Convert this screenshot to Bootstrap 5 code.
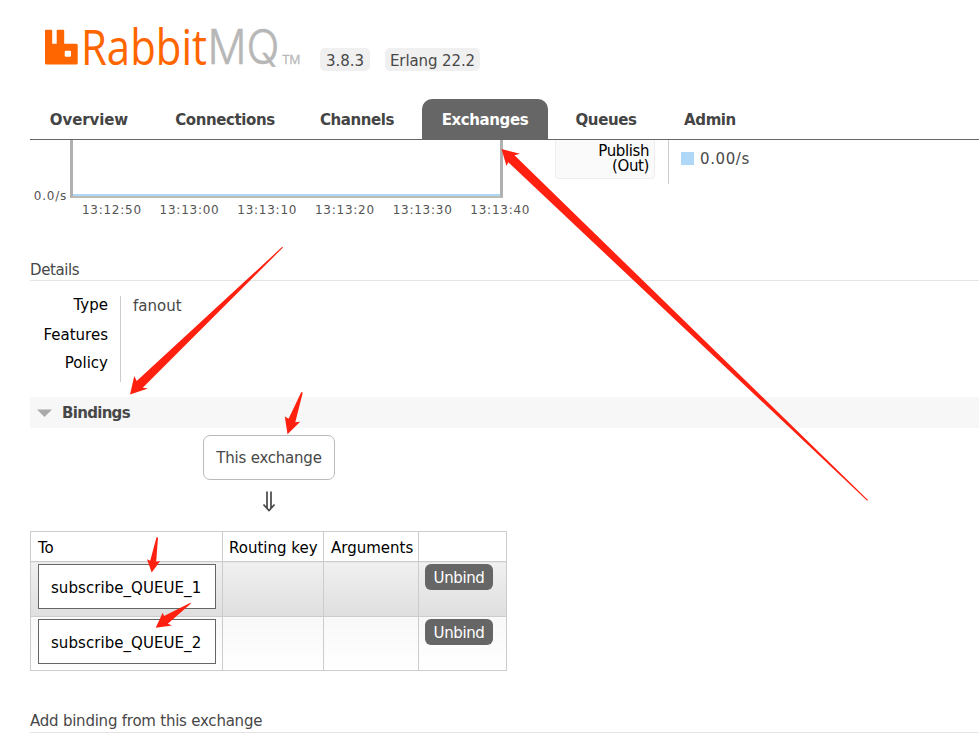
<!DOCTYPE html>
<html lang="en">
<head>
<meta charset="utf-8">
<title>RabbitMQ Management</title>
<link rel="stylesheet" href="https://cdn.jsdelivr.net/npm/bootstrap@5.3.0/dist/css/bootstrap.min.css">
<style>
body{font:15px/18px "DejaVu Sans",Verdana,sans-serif;color:#484848;width:979px;height:742px;overflow:hidden;background:#fff}
.site-head{height:99px;padding:20px 0 0 30px}
.logo{overflow:visible}
.ver{background:#f0f0f0;border-radius:5px;height:23px;line-height:26px;margin-top:28px;text-align:center;white-space:nowrap}
.v1{width:50px}.v2{width:95px;margin-left:15px;letter-spacing:-.1px}
.tabs{height:41px;margin-left:30px;border-bottom:1px solid #666}
.tabs .nav-link{padding:0;height:40px;line-height:43px;font-weight:700;color:#444;border-radius:10px 10px 0 0;text-align:center;white-space:nowrap;letter-spacing:-.4px}
.tabs .nav-link.active{background:#666;color:#fff}
.tabs .t1{width:118px;margin-right:8px;letter-spacing:-.1px}.t2{width:138px;margin-right:6px}.t3{width:114px;margin-right:8px}.t4{width:126px;margin-right:7px}.t5{width:102px;margin-right:7px}.t6{width:92px}
.chart-row{height:120px;padding-left:30px}
.plot{width:525px;color:#545454;font-size:12px;letter-spacing:.75px}
.y-label{width:40px;padding:48px 3px 0 0;line-height:16px;text-align:right}
.plot-box{width:433px;height:58px;border:solid #b0b0b0;border-width:0 3px;border-bottom:2px solid #bbbdb4;background:linear-gradient(#afd8f8,#afd8f8) 0 100%/100% 2px no-repeat}
.ticks{padding-left:43px;line-height:15px;margin-top:-1px}
.ticks span{width:77.7px;text-align:center;flex:none}
.pub{width:100px;height:39px;border:1px solid #eee;border-top:0;border-radius:0 0 4px 4px;background:#fafafa;color:#000;line-height:15px;padding:4px 5px 0 0;text-align:right;letter-spacing:-.4px}
.rate{height:44px;margin-left:13px;border-left:1px solid #ccc;padding:10px 0 0 12px;letter-spacing:.6px}
.swatch{width:13px;height:13px;background:#afd8f8;margin:2px 6px 0 0}
.sec{margin:0 0 0 30px;height:21px;border-bottom:1px solid #e4e4e4;font-size:15px;font-weight:400;line-height:20px;letter-spacing:-.4px}
.sec-add{margin-top:41px;line-height:18px;letter-spacing:-.23px}
.facts{margin:15px 0 0 30px;height:86px}
.fact-names{width:91px;padding-right:12px;border-right:1px solid #ccc;color:#000;text-align:right}
.fact-names div{height:29px}
.fact-names div:nth-child(2){padding-top:1px}
.fact-val{padding:1px 0 0 12px}
.bind-head{margin:15px 0 0 30px;height:31px;background:#f7f7f7;font-size:15px;line-height:32px;font-weight:700;padding-left:7px;letter-spacing:-.7px}
.bind-head svg{margin-right:10px}
.exch{width:132px;height:45px;border:1px solid #bbb;border-radius:7px;line-height:45px;text-align:center;margin:7px 0 0 203px;white-space:nowrap;letter-spacing:-.22px}
.down{margin-left:203px;width:132px;height:51px;padding-top:11px;text-align:center}
.bind-table{width:477px;margin-left:30px;border-collapse:collapse;table-layout:fixed;color:#000}
.bind-table th,.bind-table td{border:1px solid #ccc;font-weight:400;padding:2px 6px 0;vertical-align:top;white-space:nowrap}
.bind-table th{height:30px;padding-top:7px}
.bind-table th:first-child,.bind-table th:nth-child(3){padding-left:7px}
.c1{width:192px}.c2{width:101px}.c3{width:95px}.c4{width:88px}
.h1st{height:55px}.h2nd{height:54px}
.h1st td{background:linear-gradient(#f0f0f0,#dfdfdf)}
.h2nd td{background:linear-gradient(#f8f8f8,#fff)}
.queue{width:178px;height:45px;background:#fff;border:1px solid #666;line-height:46px;padding-left:12px;margin-left:1px;letter-spacing:.06px}
.btn-unbind{background:#666;color:#fff;width:68px;height:26px;padding:2px 0 0;border:0;border-radius:6px;font-size:15px;line-height:25px;display:block;letter-spacing:-.4px}
.arrows{left:0;top:0;pointer-events:none}
</style>
<script src="https://cdn.jsdelivr.net/npm/bootstrap@5.3.0/dist/js/bootstrap.bundle.min.js"></script>
</head>
<body class="position-relative">
<header class="site-head d-flex">
<svg width="290" height="60" viewBox="30 20 290 60" class="logo flex-shrink-0" font-family="Open Sans, sans-serif">
<path d="M46 29.700h5.200q1 0 1 1V43.800h4.500V30.700q0-1 1-1h5.500q1 0 1 1V43.800h12q1.500 0 1.500 1.500V63q0 1.500-1.500 1.500H46.500q-1.500 0-1.500-1.500V30.700q0-1 1-1zM65.700 50.700q-1 0-1 1v4q0 1 1 1h4.300q1 0 1-1v-4q0-1-1-1z" fill="#f60"/>
<text x="81" y="64.500" font-size="48.500" textLength="126" lengthAdjust="spacingAndGlyphs" fill="#f60">Rabbit</text>
<text x="207.500" y="64.300" font-family="Inter, sans-serif" font-size="47.500" font-weight="300" textLength="72" lengthAdjust="spacingAndGlyphs" fill="#b7b7b7" stroke="#b7b7b7" stroke-width=".5">MQ</text>
<text x="282.500" y="64" font-size="12.500" textLength="18" lengthAdjust="spacingAndGlyphs" fill="#b7b7b7" stroke="#b7b7b7" stroke-width=".3">TM</text>
</svg>
<span class="ver v1">3.8.3</span><span class="ver v2">Erlang 22.2</span>
</header>
<nav class="tabs nav flex-nowrap">
<a class="nav-link t1" href="#">Overview</a><a class="nav-link t2" href="#">Connections</a><a class="nav-link t3" href="#">Channels</a><a class="nav-link active t4" href="#">Exchanges</a><a class="nav-link t5" href="#">Queues</a><a class="nav-link t6" href="#">Admin</a>
</nav>
<main>
<section class="chart-row d-flex align-items-start">
<div class="plot">
<div class="d-flex"><div class="y-label">0.0/s</div><div class="plot-box"></div></div>
<div class="ticks d-flex"><span>13:12:50</span><span>13:13:00</span><span>13:13:10</span><span>13:13:20</span><span>13:13:30</span><span>13:13:40</span></div>
</div>
<div class="pub">Publish<br>(Out)</div>
<div class="rate d-flex"><span class="swatch"></span><span>0.00/s</span></div>
</section>
<h2 class="sec">Details</h2>
<section class="facts d-flex"><div class="fact-names"><div>Type</div><div>Features</div><div>Policy</div></div><div class="fact-val">fanout</div></section>
<h2 class="bind-head d-flex align-items-center"><svg width="15" height="8"><path d="M0 .5h15L7.500 8z" fill="#aaa"/></svg><span>Bindings</span></h2>
<div class="exch">This exchange</div>
<div class="down"><svg width="14" height="21" fill="none" stroke="#484848" stroke-width="1.700"><path d="M5 .5V17M9 .5V17M1.500 13.500L7 19.500l5.500-6"/></svg></div>
<table class="bind-table">
<colgroup><col class="c1"><col class="c2"><col class="c3"><col class="c4"></colgroup>
<thead><tr><th>To</th><th>Routing key</th><th>Arguments</th><th></th></tr></thead>
<tbody>
<tr class="h1st"><td><div class="queue">subscribe_QUEUE_1</div></td><td></td><td></td><td><button class="btn btn-unbind">Unbind</button></td></tr>
<tr class="h2nd"><td><div class="queue">subscribe_QUEUE_2</div></td><td></td><td></td><td><button class="btn btn-unbind">Unbind</button></td></tr>
</tbody>
</table>
<h2 class="sec sec-add">Add binding from this exchange</h2>
</main>
<svg class="arrows position-absolute" width="979" height="742" fill="#ff2010">
<path d="M501.500 149L520 153.700 514.500 155.200 868 500 867.200 500.700 508.300 162.300 506.500 166z"/>
<path d="M130 394.500L134.300 376 136.700 381 282.300 246.800 283 247.500 142.700 387.700 148 388.500z"/>
<path d="M287.500 434.300L284.800 416.500 288.600 418.800 301.200 392.200 302.800 392.500 295.300 422.300 300.200 421.700z"/>
<path d="M151.700 572.500L147 559.300 150.200 560.800 156.500 537.200 158 537.500 156.200 561.700 160.200 560.900z"/>
<path d="M155.700 627.700L162.700 612.700 164 616 190.500 602.800 190.700 603.700 167.800 623.800 172 625.500z"/>
</svg>
</body>
</html>
